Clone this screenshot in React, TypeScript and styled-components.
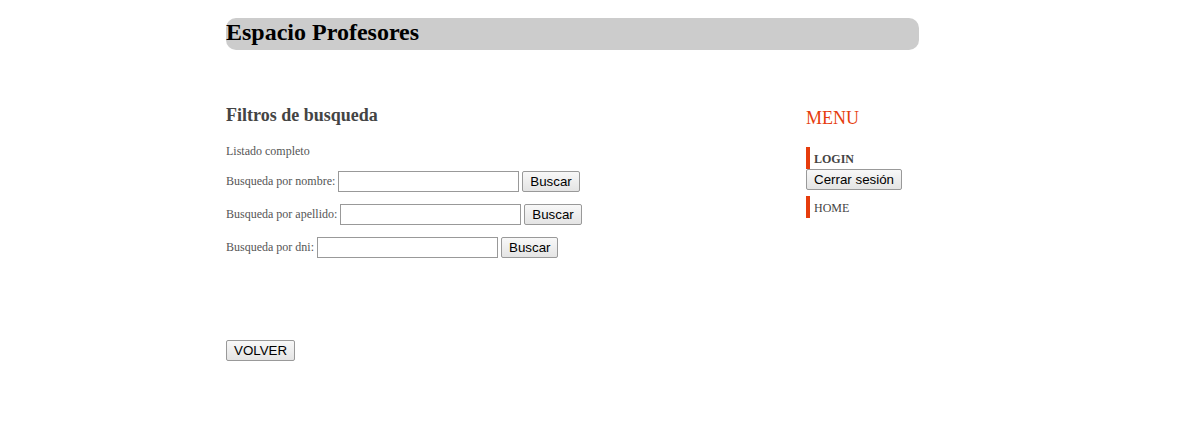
import React from "react";
import styled, { createGlobalStyle } from "styled-components";

const Global = createGlobalStyle`
  html, body { margin: 0; padding: 0; background: #fff; }
  body { font-family: "Liberation Serif", "Times New Roman", serif; color: #555; }
`;

const Page = styled.div`
  width: 745px;
  margin: 0 auto;
  padding-top: 18px;
`;

const Header = styled.header`
  width: 693px;
  height: 32px;
  background: #cccccc;
  border-radius: 10px;
`;

const Title = styled.h1`
  margin: 0;
  font-size: 24px;
  line-height: 28px;
  font-weight: bold;
  color: #000;
`;

const Body = styled.div`
  display: flex;
  margin-top: 54px;
`;

const Main = styled.main`
  width: 580px;
`;

const Heading = styled.h2`
  margin: 0;
  font-size: 18px;
  line-height: 22px;
  font-weight: bold;
  color: #444;
`;

const Line = styled.p`
  margin: 0;
  font-size: 12px;
  color: #555;
  display: flex;
  align-items: center;
  height: 21px;
`;

const Intro = styled(Line)`
  margin-bottom: -3px;
`;

const Form = styled.div`
  display: flex;
  flex-direction: column;
  gap: 12px;
  margin-top: 15px;
`;

const Input = styled.input`
  box-sizing: border-box;
  width: 181px;
  height: 21px;
  margin: 0 3px 0 3px;
  border: 1px solid #999;
  padding: 1px 2px;
`;

const Button = styled.button`
  font-family: "Liberation Sans", Arial, sans-serif;
  font-size: 13.33px;
  color: #000;
  height: 21px;
  padding: 1px 7px;
  border: 1px solid #999;
  border-radius: 2px;
  background: linear-gradient(#f8f8f8, #e4e4e4);
  line-height: 17px;
`;

const BackRow = styled.div`
  margin-top: 82px;
`;

const Side = styled.aside`
  width: 160px;
`;

const MenuTitle = styled.h3`
  margin: 3px 0 0;
  font-size: 18px;
  line-height: 22px;
  font-weight: normal;
  color: #e63c0c;
`;

const MenuList = styled.ul`
  list-style: none;
  margin: 18px 0 0;
  padding: 0;
`;

const MenuItem = styled.li`
  font-size: 11px;
  margin-bottom: 6px;
`;

const MenuLabel = styled.div<{ $bold?: boolean }>`
  box-sizing: border-box;
  border-left: 4px solid #e63c0c;
  padding: 2px 0 0 4px;
  height: 22px;
  display: flex;
  align-items: center;
  font-weight: ${(p) => (p.$bold ? "bold" : "normal")};
  color: #444;
  font-size: 12px;
`;

export default function App() {
  return (
    <>
      <Global />
      <Page>
        <Header>
          <Title>Espacio Profesores</Title>
        </Header>
        <Body>
          <Main>
            <Heading>Filtros de busqueda</Heading>
            <Form>
              <Intro>Listado completo</Intro>
              <Line>
                Busqueda por nombre:<Input type="text" />
                <Button>Buscar</Button>
              </Line>
              <Line>
                Busqueda por apellido:<Input type="text" />
                <Button>Buscar</Button>
              </Line>
              <Line>
                Busqueda por dni:<Input type="text" />
                <Button>Buscar</Button>
              </Line>
            </Form>
            <BackRow>
              <Button>VOLVER</Button>
            </BackRow>
          </Main>
          <Side>
            <MenuTitle>MENU</MenuTitle>
            <MenuList>
              <MenuItem>
                <MenuLabel $bold>LOGIN</MenuLabel>
                <Button>Cerrar sesión</Button>
              </MenuItem>
              <MenuItem>
                <MenuLabel>HOME</MenuLabel>
              </MenuItem>
            </MenuList>
          </Side>
        </Body>
      </Page>
    </>
  );
}
